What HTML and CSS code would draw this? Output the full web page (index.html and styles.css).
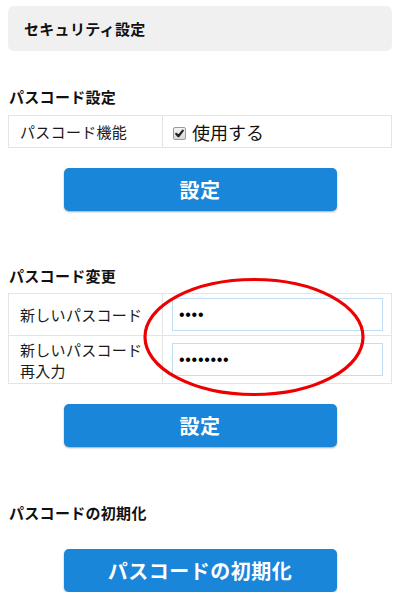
FILE: index.html
```html
<!DOCTYPE html>
<html lang="ja">
<head>
<meta charset="utf-8">
<link rel="stylesheet" href="styles.css">
</head>
<body>
<div class="page">
  <div class="title-box">セキュリティ設定</div>

  <h2 class="sec-title first">パスコード設定</h2>
  <table class="form-table">
    <tr class="row-a">
      <th>パスコード機能</th>
      <td><label class="check"><span class="box"><svg viewBox="0 0 13 13" width="13" height="13"><path d="M3.2 6.8 L5.4 9.2 L9.8 3.6" fill="none" stroke="#222" stroke-width="2.2" stroke-linecap="round" stroke-linejoin="round"/></svg></span><span class="check-text">使用する</span></label></td>
    </tr>
  </table>
  <button class="btn">設定</button>

  <h2 class="sec-title">パスコード変更</h2>
  <table class="form-table">
    <tr class="row-b">
      <th>新しいパスコード</th>
      <td><input class="pw" type="password" value="1234"></td>
    </tr>
    <tr class="row-c">
      <th>新しいパスコード<br>再入力</th>
      <td><input class="pw" type="password" value="12345678"></td>
    </tr>
  </table>
  <button class="btn">設定</button>

  <h2 class="sec-title third">パスコードの初期化</h2>
  <button class="btn btn-reset">パスコードの初期化</button>

  <svg class="circle-mark" viewBox="0 0 226 122" width="226" height="122">
    <ellipse cx="113" cy="61" rx="109" ry="57.5" fill="none" stroke="#ee0000" stroke-width="3.2"/>
  </svg>
</div>
</body>
</html>
```

FILE: styles.css
```css
html, body {
  margin: 0;
  padding: 0;
  background: #ffffff;
}

body {
  font-family: "Noto Sans CJK JP", "Noto Sans", sans-serif;
  color: #111;
}

.page {
  position: relative;
  padding: 6px 8px 0;
}

.title-box {
  height: 45px;
  background: #f0f0f0;
  border-radius: 6px;
  display: flex;
  align-items: center;
  padding-left: 16px;
  font-size: 15px;
  font-weight: bold;
  letter-spacing: 0.3px;
}

.sec-title {
  margin: 54px 0 6px 1px;
  font-size: 15px;
  line-height: 22px;
  font-weight: bold;
  letter-spacing: 0.3px;
}

.sec-title.first {
  margin-top: 35px;
  margin-bottom: 7px;
}

.sec-title.third {
  margin-top: 55px;
  margin-bottom: 25px;
}

.form-table {
  width: 384px;
  border-collapse: collapse;
  table-layout: fixed;
}

.form-table th,
.form-table td {
  border: 1px solid #e4e4e4;
  padding: 0;
  vertical-align: middle;
}

.form-table th {
  width: 142px;
  text-align: left;
  font-weight: normal;
  font-size: 15px;
  line-height: 22px;
  padding-left: 11px;
  letter-spacing: 0.3px;
  color: #1a1a1a;
}

.row-a th,
.row-a td {
  height: 31px;
}

.row-b th,
.row-b td {
  height: 41px;
}

.row-c th,
.row-c td {
  height: 47px;
}

.row-c th {
  line-height: 21px;
}

.form-table td {
  padding-left: 9px;
  padding-right: 8px;
}

.check {
  display: flex;
  align-items: center;
  padding-left: 1px;
}

.box {
  width: 13px;
  height: 13px;
  box-sizing: border-box;
  border: 1px solid #9a9a9a;
  border-radius: 2px;
  background: linear-gradient(#f4f4f4, #d8d8d8);
  display: flex;
  margin-top: 3px;
}

.box svg {
  display: block;
  margin: -1px;
}

.check-text {
  margin-left: 6px;
  font-size: 18px;
  line-height: 22px;
  color: #111;
}

.pw {
  display: block;
  width: 100%;
  height: 33px;
  box-sizing: border-box;
  border: 1px solid #c2def6;
  border-radius: 0;
  padding: 0 6px;
  font-family: "Liberation Sans", sans-serif;
  font-size: 16px;
  letter-spacing: 0.7px;
  color: #000;
  outline: none;
  background: #fff;
}

.btn {
  display: block;
  width: 273px;
  height: 43px;
  margin: 20px auto 0;
  padding: 0;
  border: none;
  border-radius: 5px;
  background: #1a86d9;
  box-shadow: 0 1px 2px rgba(0, 0, 0, 0.35);
  color: #ffffff;
  font-family: "Noto Sans CJK JP", "Noto Sans", sans-serif;
  font-size: 20px;
  font-weight: bold;
  line-height: 43px;
  letter-spacing: 0.5px;
}

.btn-reset {
  margin-top: 0;
}

.circle-mark {
  position: absolute;
  left: 141px;
  top: 276px;
  pointer-events: none;
}
```
